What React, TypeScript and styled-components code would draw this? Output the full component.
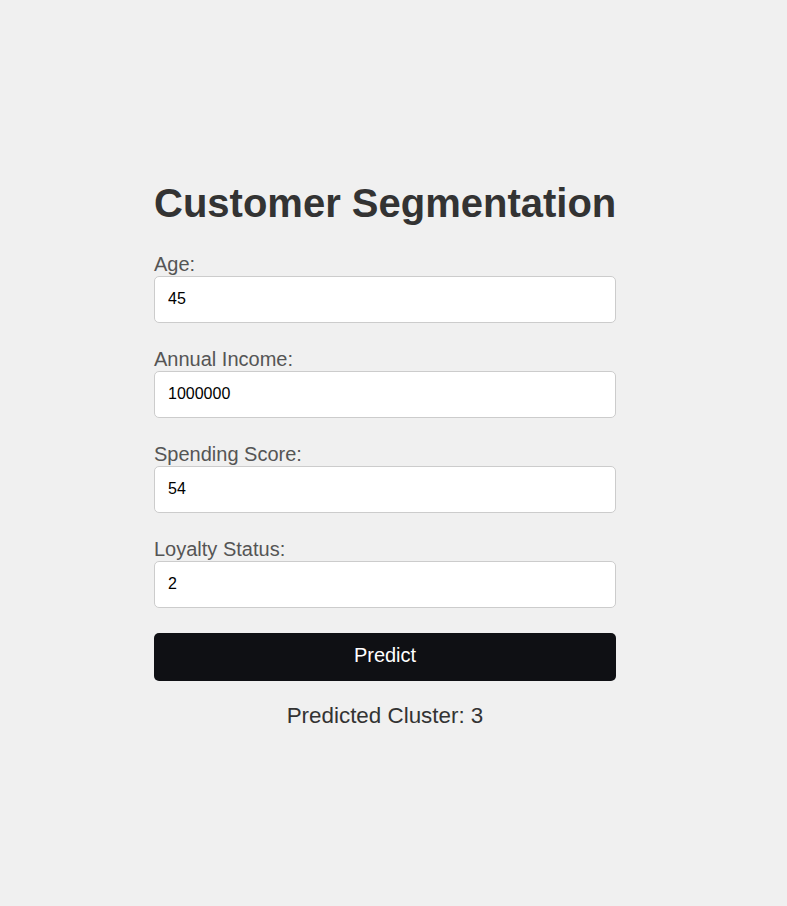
import React, { useState } from "react";
import styled, { createGlobalStyle } from "styled-components";

const GlobalStyle = createGlobalStyle`
  html, body {
    margin: 0;
    padding: 0;
    background: #f0f0f0;
    font-family: "Liberation Sans", Arial, sans-serif;
  }
`;

const Page = styled.div`
  box-sizing: border-box;
  width: 770px;
  min-height: 906px;
  padding-top: 180px;
  display: flex;
  justify-content: center;
  align-items: flex-start;
`;

const Card = styled.div`
  width: 462px;
  display: flex;
  flex-direction: column;
`;

const Title = styled.h1`
  margin: 0 0 27px;
  font-size: 40px;
  line-height: 46px;
  font-weight: 700;
  color: #333;
  white-space: nowrap;
`;

const Form = styled.form`
  display: flex;
  flex-direction: column;
  gap: 25px;
`;

const Field = styled.div`
  display: flex;
  flex-direction: column;
`;

const Label = styled.label`
  font-size: 20px;
  line-height: 23px;
  color: #555;
`;

const Input = styled.input`
  box-sizing: border-box;
  width: 100%;
  height: 47px;
  margin: 0;
  padding: 0 13px 1px;
  border: 1px solid #ccc;
  border-radius: 5px;
  background: #fff;
  font-family: "Liberation Sans", Arial, sans-serif;
  font-size: 16px;
  color: #000;
  outline: none;
`;

const Button = styled.button`
  box-sizing: border-box;
  width: 100%;
  height: 48px;
  padding: 0 0 3px;
  border: none;
  border-radius: 5px;
  background: #0f1014;
  color: #fff;
  font-family: "Liberation Sans", Arial, sans-serif;
  font-size: 20px;
  cursor: pointer;
`;

const Result = styled.p`
  margin: 22px 0 0;
  text-align: center;
  font-size: 22.4px;
  line-height: 26px;
  color: #333;
`;

const fields = [
  { id: "age", label: "Age:", value: "45" },
  { id: "income", label: "Annual Income:", value: "1000000" },
  { id: "score", label: "Spending Score:", value: "54" },
  { id: "loyalty", label: "Loyalty Status:", value: "2" },
];

export default function App() {
  const [values, setValues] = useState<Record<string, string>>(
    Object.fromEntries(fields.map((f) => [f.id, f.value]))
  );

  return (
    <>
      <GlobalStyle />
      <Page>
        <Card>
          <Title>Customer Segmentation</Title>
          <Form onSubmit={(e) => e.preventDefault()}>
            {fields.map((f) => (
              <Field key={f.id}>
                <Label htmlFor={f.id}>{f.label}</Label>
                <Input
                  id={f.id}
                  type="text"
                  value={values[f.id]}
                  onChange={(e) => setValues({ ...values, [f.id]: e.target.value })}
                />
              </Field>
            ))}
            <Button type="submit">Predict</Button>
          </Form>
          <Result>Predicted Cluster: 3</Result>
        </Card>
      </Page>
    </>
  );
}
